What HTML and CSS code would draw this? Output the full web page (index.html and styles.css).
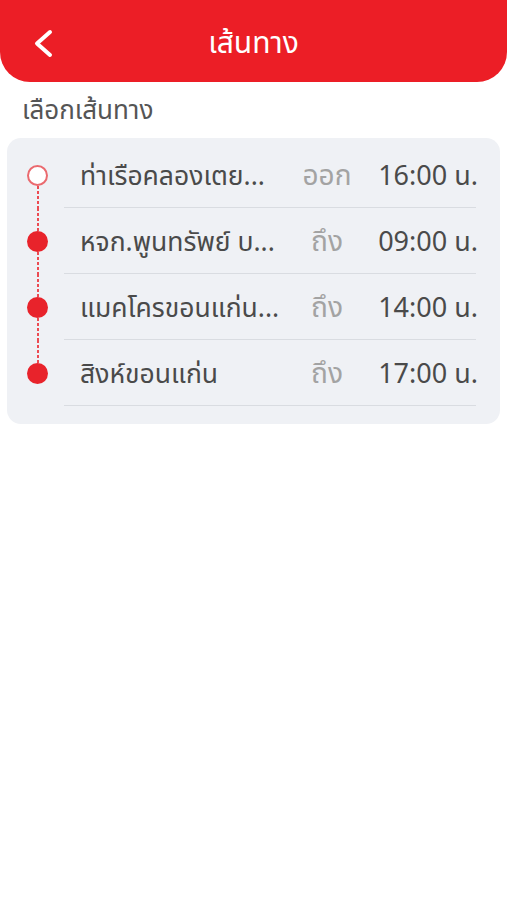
FILE: index.html
```html
<!DOCTYPE html>
<html>
    <head lang="th">
        <meta charset="UTF-8">
        <title>เส้นทาง</title>
        <link rel="stylesheet" href="styles.css">
    </head>
    <body>
    <div id="header">
        <span class="back">
            <svg width="24" height="32" viewBox="0 0 24 32">
                <polyline points="18,4 5,15.5 18,27" fill="none" stroke="#fff" stroke-width="4" stroke-linecap="round" stroke-linejoin="round"/>
            </svg>
        </span>
        <h1 class="title">เส้นทาง</h1>
    </div>
    <p class="subtitle">เลือกเส้นทาง</p>
    <div id="route">
        <div class="row first">
            <div class="marker">
                <span class="line"></span>
                <span class="dot"></span>
                <span class="line"></span>
            </div>
            <div class="info">
                <span class="name">ท่าเรือคลองเตย...</span>
                <span class="state">ออก</span>
                <span class="time">16:00 น.</span>
            </div>
        </div>
        <div class="row">
            <div class="marker">
                <span class="line"></span>
                <span class="dot"></span>
                <span class="line"></span>
            </div>
            <div class="info">
                <span class="name">หจก.พูนทรัพย์ บ...</span>
                <span class="state">ถึง</span>
                <span class="time">09:00 น.</span>
            </div>
        </div>
        <div class="row">
            <div class="marker">
                <span class="line"></span>
                <span class="dot"></span>
                <span class="line"></span>
            </div>
            <div class="info">
                <span class="name">แมคโครขอนแก่น...</span>
                <span class="state">ถึง</span>
                <span class="time">14:00 น.</span>
            </div>
        </div>
        <div class="row last">
            <div class="marker">
                <span class="line"></span>
                <span class="dot"></span>
                <span class="line"></span>
            </div>
            <div class="info">
                <span class="name">สิงห์ขอนแก่น</span>
                <span class="state">ถึง</span>
                <span class="time">17:00 น.</span>
            </div>
        </div>
    </div>
    </body>
</html>
```

FILE: styles.css
```css
*{
    margin:0;
    padding:0;
    box-sizing:border-box;
}
body{
    background:#fff;
    font-family:"Noto Sans", "Noto Sans Thai", sans-serif;
    color:#4a4a4a;
}
#header{
    height:82px;
    background:#ec1e26;
    border-radius:0 0 30px 30px;
    display:flex;
    align-items:center;
    padding:6px 56px 0 32px;
}
#header .back{
    width:24px;
    height:32px;
    display:flex;
}
#header .title{
    flex:1;
    text-align:center;
    color:#fff;
    font-size:30px;
    font-weight:normal;
}
.subtitle{
    font-size:26px;
    color:#555;
    padding:9px 0 0 22px;
    height:56px;
}
#route{
    margin:0 7px;
    background:#eff1f5;
    border-radius:14px;
    padding:4px 24px 18px 0;
}
.row{
    display:flex;
    height:66px;
}
.marker{
    width:57px;
    padding-left:20px;
    display:flex;
    flex-direction:column;
}
.marker .line{
    flex:1;
    width:21px;
    background:linear-gradient(#ec4b52 60%, transparent 60%) center top/2px 5px repeat-y;
}
.first .marker .line:first-child,
.last .marker .line:last-child{
    background:none;
}
.marker .dot{
    width:21px;
    height:21px;
    border-radius:50%;
    background:#e8232b;
}
.first .marker .dot{
    background:#fff;
    border:2px solid #ea6a6f;
}
.info{
    flex:1;
    display:flex;
    align-items:center;
    padding:4px 0 0 16px;
    border-bottom:1px solid #d9dce1;
    font-size:26.5px;
}
.name{
    flex:1;
    white-space:nowrap;
    overflow:hidden;
}
.state{
    width:70px;
    text-align:center;
    font-size:28px;
    color:#a3a3a3;
}
.time{
    width:116px;
    margin-right:-2px;
    text-align:right;
    font-size:27px;
}
```
